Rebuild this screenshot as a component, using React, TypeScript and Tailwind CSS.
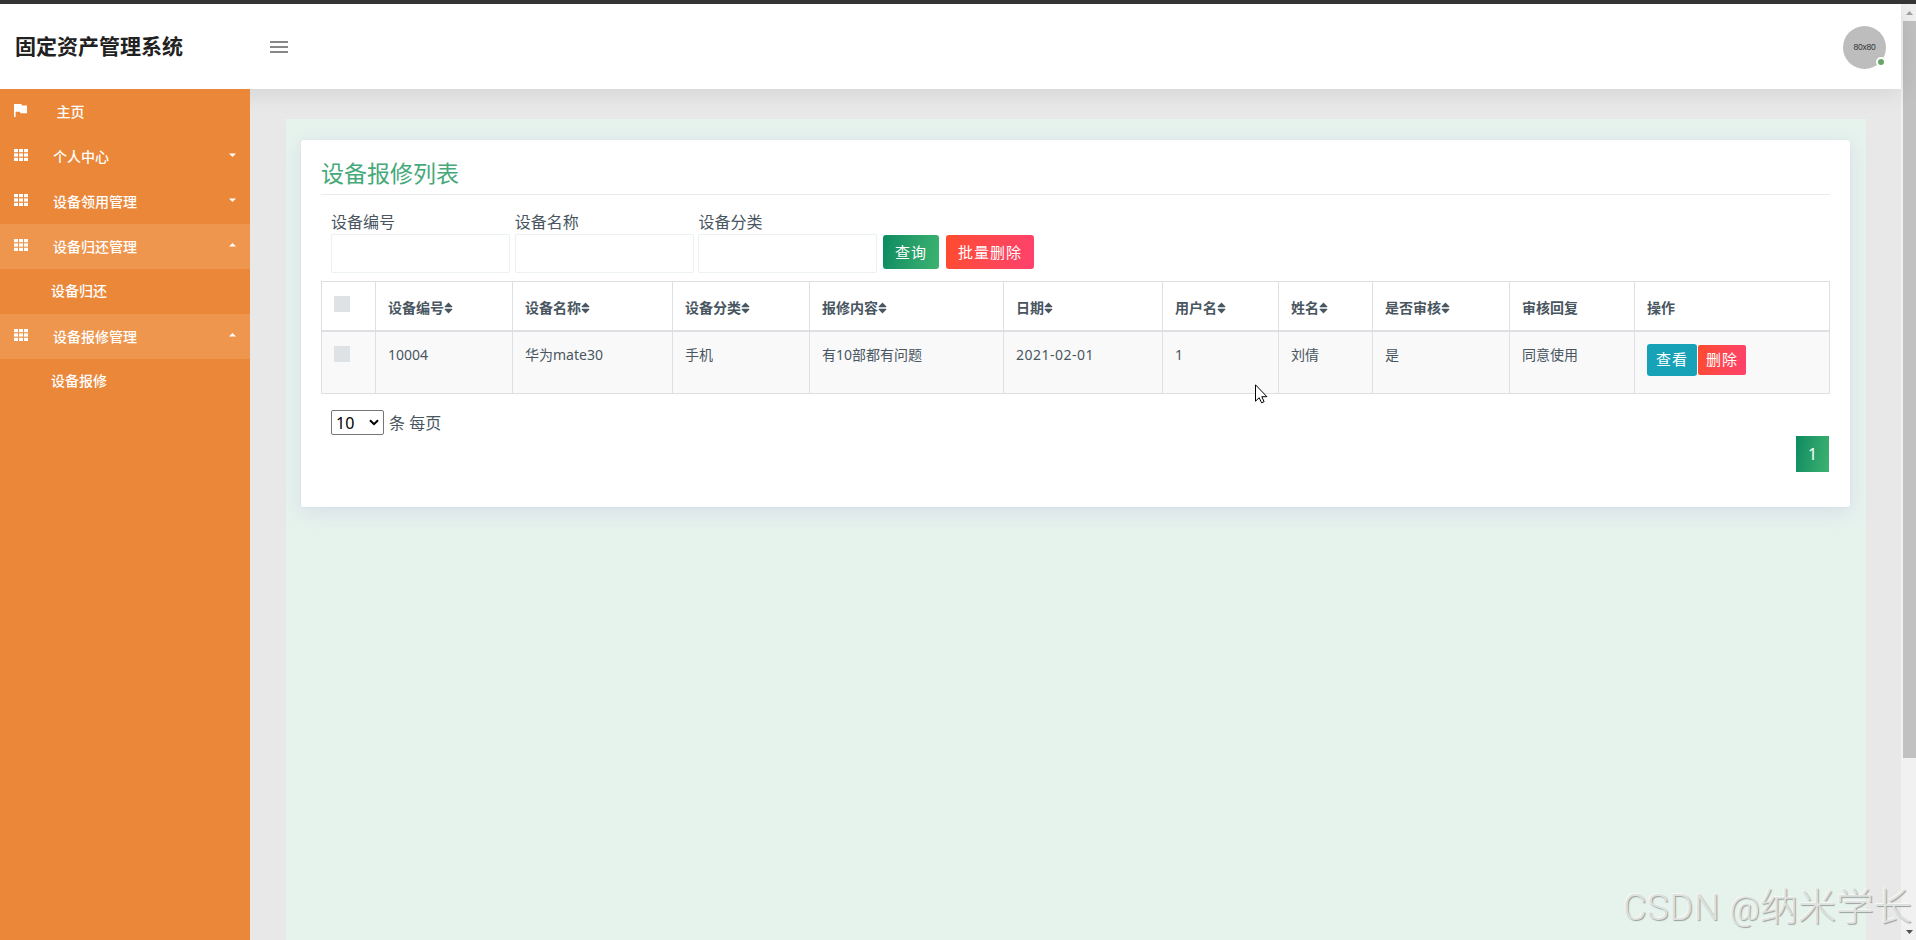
import clsx from "clsx";

type MenuItem = {
  label: string;
  kind: "home" | "group" | "sub";
  open?: boolean;
};

const menu: MenuItem[] = [
  { label: "主页", kind: "home" },
  { label: "个人中心", kind: "group" },
  { label: "设备领用管理", kind: "group" },
  { label: "设备归还管理", kind: "group", open: true },
  { label: "设备归还", kind: "sub" },
  { label: "设备报修管理", kind: "group", open: true },
  { label: "设备报修", kind: "sub" },
];

const columns = [
  { title: "设备编号", width: 137, sortable: true },
  { title: "设备名称", width: 160, sortable: true },
  { title: "设备分类", width: 137, sortable: true },
  { title: "报修内容", width: 194, sortable: true },
  { title: "日期", width: 159, sortable: true },
  { title: "用户名", width: 116, sortable: true },
  { title: "姓名", width: 94, sortable: true },
  { title: "是否审核", width: 137, sortable: true },
  { title: "审核回复", width: 125, sortable: false },
];

const rows = [
  ["10004", "华为mate30", "手机", "有10部都有问题", "2021-02-01", "1", "刘倩", "是", "同意使用"],
];

function FlagIcon() {
  return (
    <svg width="13" height="13" viewBox="0 0 13 13" fill="currentColor">
      <path d="M7.8 1.5 7.5 0H0v13h1.6V7.8H6l.3 1.5H13V1.5z" />
    </svg>
  );
}

function GridIcon() {
  return (
    <svg width="14" height="12" viewBox="0 0 14 12" fill="currentColor">
      {[0, 5, 10].map((x) =>
        [0, 4.4, 8.8].map((y) => <rect key={`${x}-${y}`} x={x} y={y} width="4" height="3.2" />)
      )}
    </svg>
  );
}

function Caret({ up }: { up?: boolean }) {
  return (
    <svg width="7" height="4" viewBox="0 0 7 4" fill="currentColor">
      <path d={up ? "M0 3.5h7L3.5 0z" : "M0 .5h7L3.5 4z"} />
    </svg>
  );
}

function SortIcon() {
  return (
    <svg className="inline-block align-[-1px]" width="9" height="12" viewBox="0 0 9 12" fill="currentColor">
      <path d="M4.5.4 8.4 4.4q.3.7-.5.8H1.1q-.8-.1-.5-.8zM4.5 11.6 8.4 7.6q.3-.7-.5-.8H1.1q-.8.1-.5.8z" />
    </svg>
  );
}

function Header() {
  return (
    <header className="relative z-10 flex h-[85px] shrink-0 items-center bg-white shadow-[0_2px_24px_rgba(0,0,0,0.1)]">
      <h1 className="w-[270px] pb-0.5 pl-[15px] text-[21px] leading-8 font-bold text-[#212121]">固定资产管理系统</h1>
      <svg width="18" height="12" viewBox="0 0 18 12" fill="#888888">
        <path d="M0 0h18v2H0zM0 5h18v2H0zM0 10h18v2H0z" />
      </svg>
      <div className="relative mt-px mr-[15px] ml-auto flex size-[43px] items-center justify-center rounded-full bg-[#bdbdbd]">
        <span className="font-['Liberation_Sans',sans-serif] text-[8.5px] tracking-[-0.2px] text-[#333]">80x80</span>
        <span className="absolute right-0 bottom-0.5 size-2.5 rounded-full border-2 border-white bg-[#6aa567]" />
      </div>
    </header>
  );
}

function Sidebar() {
  return (
    <nav className="relative z-20 w-[250px] shrink-0 bg-[#eb8739] text-white">
      {menu.map((item) => (
        <div
          key={item.label}
          className={clsx(
            "flex h-[45px] items-center pl-3.5 text-sm font-medium",
            item.open && "bg-[#ee964e]"
          )}
        >
          <span className="w-[14px] pb-[3px]">
            {item.kind === "home" && <FlagIcon />}
            {item.kind === "group" && <GridIcon />}
          </span>
          <span
            className={clsx(
              item.kind === "home" && "ml-[28.5px]",
              item.kind === "group" && "ml-[25px]",
              item.kind === "sub" && "mb-0.5 ml-[23px]"
            )}
          >
            {item.label}
          </span>
          {item.kind === "group" && (
            <span className="mr-3.5 mb-[3px] ml-auto">
              <Caret up={item.open} />
            </span>
          )}
        </div>
      ))}
    </nav>
  );
}

function SearchForm() {
  return (
    <div className="mt-[15px] flex items-end pl-2.5">
      {["设备编号", "设备名称", "设备分类"].map((label) => (
        <label key={label} className="mr-[4.7px] block w-[179px] text-base leading-6">
          {label}
          <input className="block h-[39px] w-full rounded-xs border border-[#eaf1ef] bg-white px-3 outline-none" />
        </label>
      ))}
      <button className="mb-1 ml-px h-[34px] w-14 rounded-[3px] bg-linear-100 from-[#098b61] to-[#3cb371] text-[15px] tracking-[1px] text-white">
        查询
      </button>
      <button className="mb-1 ml-[7px] h-[34px] w-[88px] rounded-[3px] bg-linear-100 from-[#ff4b2b] to-[#ff416c] text-[15px] tracking-[1px] text-white">
        批量删除
      </button>
    </div>
  );
}

function RepairTable() {
  return (
    <table className="mt-2 w-[1509px] table-fixed border-collapse text-left text-sm">
      <colgroup>
        <col style={{ width: 54 }} />
        {columns.map((c) => (
          <col key={c.title} style={{ width: c.width }} />
        ))}
        <col />
      </colgroup>
      <thead>
        <tr className="h-[49px]">
          <th className="border border-b-2 border-[#dedfe3] px-3">
            <div className="mb-[3px] size-4 bg-[#dee2e4]" />
          </th>
          {columns.map((c) => (
            <th key={c.title} className="border border-b-2 border-[#dedfe3] px-3 pt-1 font-semibold whitespace-nowrap">
              {c.title}
              {c.sortable && <SortIcon />}
            </th>
          ))}
          <th className="border border-b-2 border-[#dedfe3] px-3 pt-1 font-semibold">操作</th>
        </tr>
      </thead>
      <tbody>
        {rows.map((row) => (
          <tr key={row[0]} className="h-[63px] bg-[#f9f9fa] align-top">
            <td className="border border-[#dedfe3] px-3 pt-[14px]">
              <div className="size-4 bg-[#dee2e4]" />
            </td>
            {row.map((cell, i) => (
              <td
                key={i}
                className={clsx(
                  "border border-[#dedfe3] px-3 pt-3 leading-[21px]",
                  columns[i].title === "日期" && "tracking-[0.5px]"
                )}
              >
                {cell}
              </td>
            ))}
            <td className="border border-[#dedfe3] px-3 pt-3">
              <div className="flex items-center gap-px">
                <button className="h-8 w-[50px] rounded-[3px] bg-[#17a2b8] pt-px text-[15px] tracking-[1px] text-white">查看</button>
                <button className="h-[30px] w-12 rounded-xs bg-linear-100 from-[#ff4b2b] to-[#ff416c] pt-px text-[15px] tracking-[1px] text-white">
                  删除
                </button>
              </div>
            </td>
          </tr>
        ))}
      </tbody>
    </table>
  );
}

function PageSize() {
  return (
    <div className="mt-4 flex h-[25px] items-center pl-2.5 text-base">
      <div className="flex h-[25px] w-[53px] items-center justify-between rounded-xs border border-[#767676] bg-white pr-1 pl-1 text-black">
        10
        <svg width="10" height="7" viewBox="0 0 10 7" fill="none" stroke="black" strokeWidth="2">
          <path d="M1 1.2 5 5.2 9 1.2" />
        </svg>
      </div>
      <span className="ml-[5px]">条 每页</span>
    </div>
  );
}

function Scrollbar() {
  return (
    <div className="flex w-[15px] shrink-0 flex-col items-end bg-[#f1f1f1]">
      <div className="flex h-[17px] w-[13px] items-center justify-center">
        <svg width="7" height="4" viewBox="0 0 7 4" fill="#a3a3a3">
          <path d="M0 4h7L3.5 0z" />
        </svg>
      </div>
      <div className="h-[737px] w-[13px] bg-[#c1c1c1]" />
      <div className="mt-auto flex h-4 w-[13px] items-center justify-center">
        <svg width="7" height="4" viewBox="0 0 7 4" fill="#505050">
          <path d="M0 0h7L3.5 4z" />
        </svg>
      </div>
    </div>
  );
}

export default function App() {
  return (
    <div className="relative flex h-[940px] w-[1916px] flex-col overflow-hidden bg-[#e8e8e8] font-['Noto_Sans','Noto_Sans_CJK_SC',sans-serif] text-[#49565f]">
      <div className="h-1 shrink-0 bg-[#363636]" />
      <div className="flex min-h-0 flex-1">
        <div className="flex min-w-0 flex-1 flex-col">
          <Header />
          <div className="flex min-h-0 flex-1">
            <Sidebar />
            <main className="flex min-w-0 flex-1 pt-[30px] pr-[35px] pl-9">
              <div className="flex-1 bg-[#e6f3ed] px-[15px] pt-[21px]">
                <section className="h-[367px] w-[1549px] rounded-xs bg-white px-5 pt-[17px] shadow-[0_0_1px_rgba(180,190,210,0.8),0_5px_20px_rgba(210,215,230,0.75)]">
                  <h2 className="h-[38px] border-b border-[#ebebeb] text-[23px] leading-8 text-[#46a97a]">设备报修列表</h2>
                  <SearchForm />
                  <RepairTable />
                  <PageSize />
                  <div className="mt-px flex justify-end pr-px">
                    <span className="flex h-9 w-[33px] items-center justify-center bg-linear-100 from-[#098b61] to-[#3cb371] text-base text-white">
                      1
                    </span>
                  </div>
                </section>
              </div>
            </main>
          </div>
        </div>
        <Scrollbar />
      </div>

      <svg className="absolute top-[384px] left-[1255px] z-30" width="13" height="20" viewBox="0 0 13 20">
        <path d="M.5.8v16.4l3.7-3.5 2.4 5.1 2.5-1.1-2.3-5h5.1z" fill="white" stroke="black" />
      </svg>
      <div className="absolute right-[4px] bottom-[5px] z-30 font-['Roboto','Noto_Sans_CJK_SC',sans-serif] text-[38px] leading-[52px] font-light whitespace-nowrap text-[#dde1df] [text-shadow:1px_1px_1px_#9a9e9c,-1px_-1px_0_#f5f8f6]">
        <span className="text-[36px] tracking-[0.8px]">CSDN </span>
        <span className="text-[33px]">@</span>纳米学长
      </div>
    </div>
  );
}
